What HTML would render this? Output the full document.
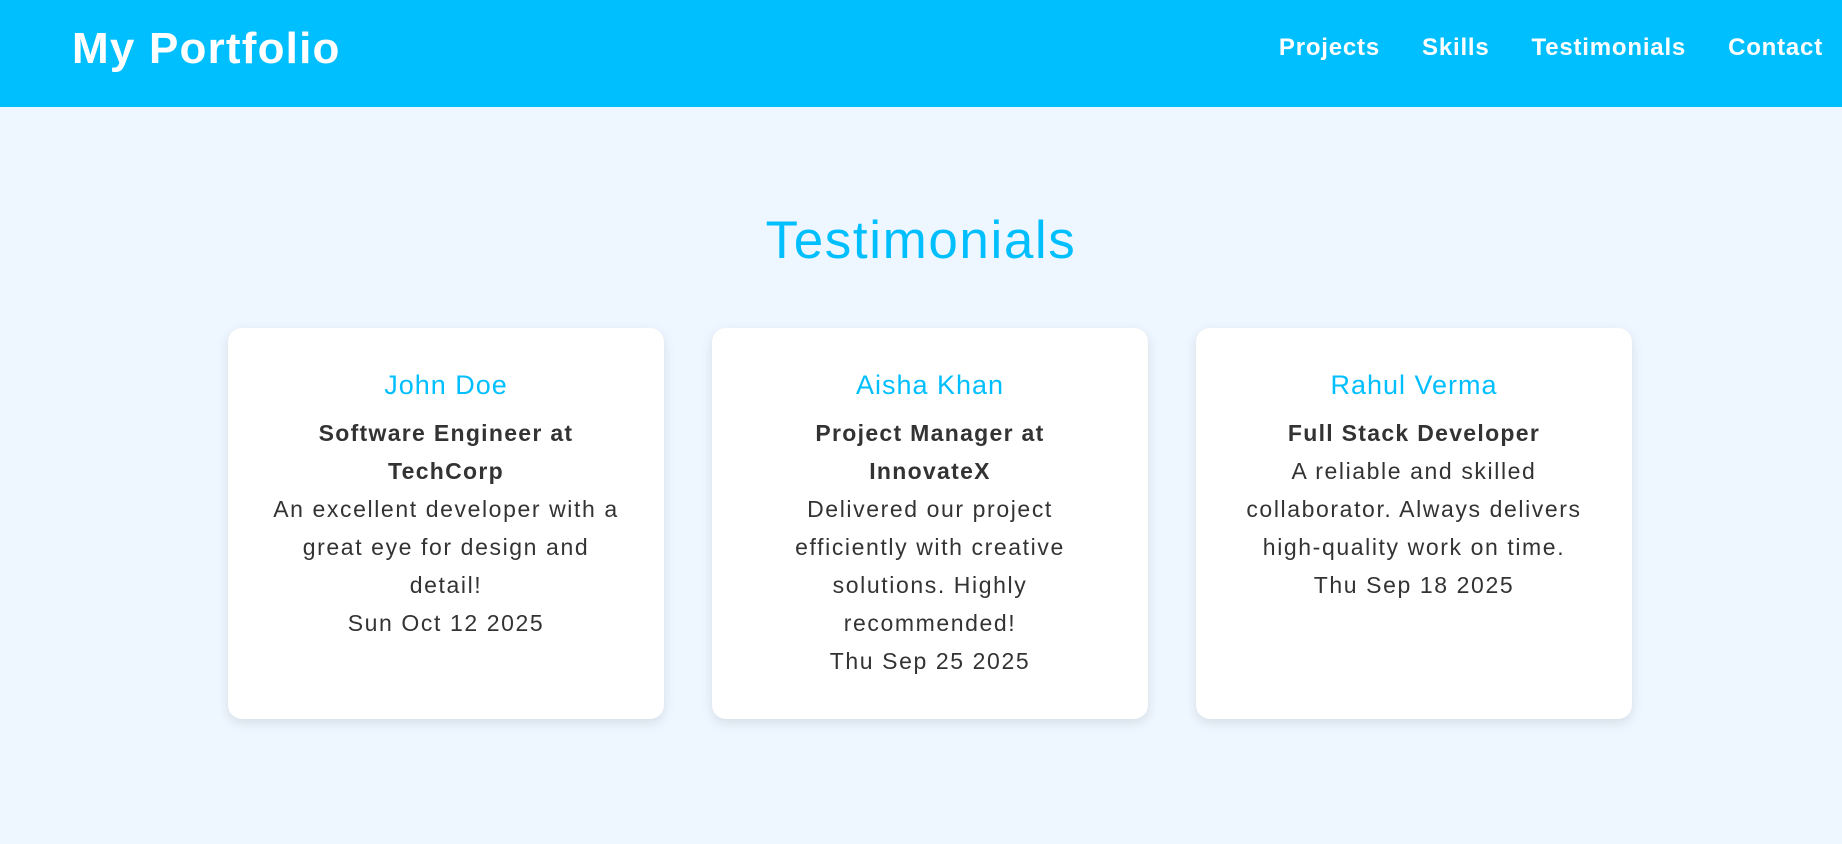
<!DOCTYPE html>
<html><head><meta charset="utf-8"><style>
*{margin:0;padding:0;box-sizing:border-box}
body{width:1842px;height:844px;background:#eef6ff;font-family:"Liberation Sans",sans-serif;color:#333;overflow:hidden}
header{height:107px;background:#00bfff;position:relative;color:#fff}
.logo{position:absolute;left:72px;top:24px;font-size:44px;font-weight:bold;letter-spacing:1.2px}
nav{position:absolute;right:19px;top:34px;font-size:24px;font-weight:bold}
nav span{margin-left:42px;letter-spacing:0.8px}
h2{text-align:center;color:#00bfff;font-size:53px;font-weight:normal;letter-spacing:1.6px;line-height:66px;position:absolute;left:0;right:0;top:208px}
.cards{position:absolute;top:328px;left:228px;display:flex;gap:48px}
.card{width:436px;height:391px;background:#fff;border-radius:14px;box-shadow:0 4px 12px rgba(0,0,0,0.1);text-align:center;padding:40px 10px 0}
.card h3{color:#00bfff;font-size:27px;font-weight:normal;margin-bottom:12px;letter-spacing:1px;line-height:34px}
.card p{font-size:23px;line-height:38px;letter-spacing:1.6px;white-space:nowrap}
.card b{display:block;letter-spacing:1.3px}
</style></head><body>
<header><div class="logo">My Portfolio</div>
<nav><span>Projects</span><span>Skills</span><span>Testimonials</span><span>Contact</span></nav></header>
<h2>Testimonials</h2>
<div class="cards">
<div class="card"><h3>John Doe</h3><p><b>Software Engineer at<br>TechCorp</b>An excellent developer with a<br>great eye for design and<br>detail!<br>Sun Oct 12 2025</p></div>
<div class="card"><h3>Aisha Khan</h3><p><b>Project Manager at<br>InnovateX</b>Delivered our project<br>efficiently with creative<br>solutions. Highly<br>recommended!<br>Thu Sep 25 2025</p></div>
<div class="card"><h3>Rahul Verma</h3><p><b>Full Stack Developer</b>A reliable and skilled<br>collaborator. Always delivers<br>high-quality work on time.<br>Thu Sep 18 2025</p></div>
</div>
</body></html>
